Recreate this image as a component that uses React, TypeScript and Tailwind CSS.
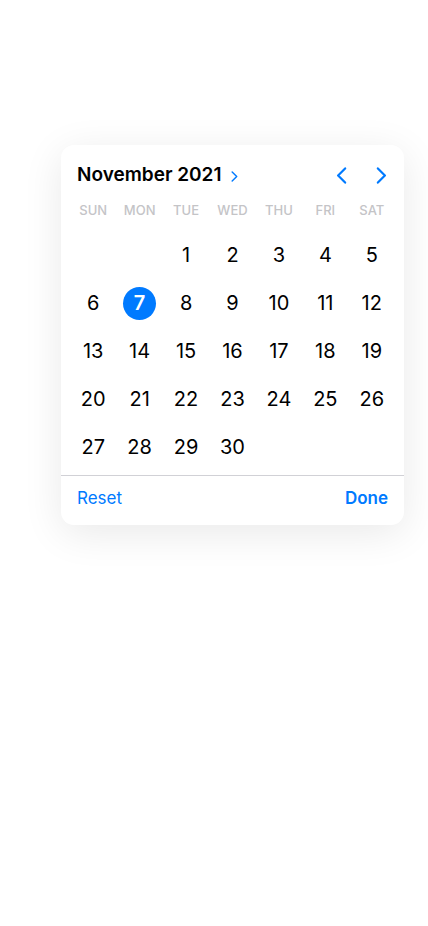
import React from 'react';

const WEEKDAYS = ['SUN', 'MON', 'TUE', 'WED', 'THU', 'FRI', 'SAT'];

// grid as shown: the 1st falls under TUE
const CELLS: (number | null)[] = [
  null,
  null,
  ...Array.from({ length: 30 }, (_, i) => i + 1),
];

function Chevron({ dir, className }: { dir: 'left' | 'right'; className: string }) {
  return (
    <svg viewBox="0 0 10 17" fill="none" className={className}>
      <path
        d={dir === 'left' ? 'M8.6 1.4L1.6 8.5l7 7.1' : 'M1.4 1.4l7 7.1-7 7.1'}
        stroke="#007aff"
        strokeWidth="2.2"
        strokeLinecap="round"
        strokeLinejoin="round"
      />
    </svg>
  );
}

export default function App() {
  const selected = 7;

  return (
    <div className="min-h-[926px] w-full bg-white pt-[145px] font-['Inter',_'Liberation_Sans',_sans-serif]">
      <div className="ml-[61px] w-[343px] rounded-[13px] bg-white shadow-[0_8px_40px_rgba(0,0,0,0.09)]">
        {/* header */}
        <div className="flex h-[56px] items-center pl-4 pr-[17px] pt-[5px]">
          <span className="text-[19px] font-semibold text-black">November 2021</span>
          <Chevron dir="right" className="ml-[10px] mt-[1px] h-[11px] w-[7px]" />
          <div className="ml-auto flex items-center gap-[29px]">
            <Chevron dir="left" className="h-[17px] w-[11px]" />
            <Chevron dir="right" className="h-[17px] w-[11px]" />
          </div>
        </div>

        {/* weekday labels */}
        <div className="grid grid-cols-7 px-[9px]">
          {WEEKDAYS.map((d) => (
            <div key={d} className="flex h-[20px] items-center justify-center text-[13px] font-medium text-[#c4c4c7]">
              {d}
            </div>
          ))}
        </div>

        {/* days */}
        <div className="mt-[10px] grid grid-cols-7 px-[9px] pb-[4px]">
          {CELLS.map((n, i) => (
            <div key={i} className="flex h-[48px] items-center justify-center">
              {n !== null &&
                (n === selected ? (
                  <span className="flex h-[33px] w-[33px] items-center justify-center rounded-full bg-[#007aff] text-[20px] font-semibold text-white">
                    {n}
                  </span>
                ) : (
                  <span className="text-[20px] text-black">{n}</span>
                ))}
            </div>
          ))}
        </div>

        {/* footer */}
        <div className="flex h-[50px] items-start justify-between border-t border-[#d1d1d6] px-4 pt-[10px]">
          <button className="text-[17px] text-[#007aff]">Reset</button>
          <button className="text-[17px] font-semibold text-[#007aff]">Done</button>
        </div>
      </div>
    </div>
  );
}
